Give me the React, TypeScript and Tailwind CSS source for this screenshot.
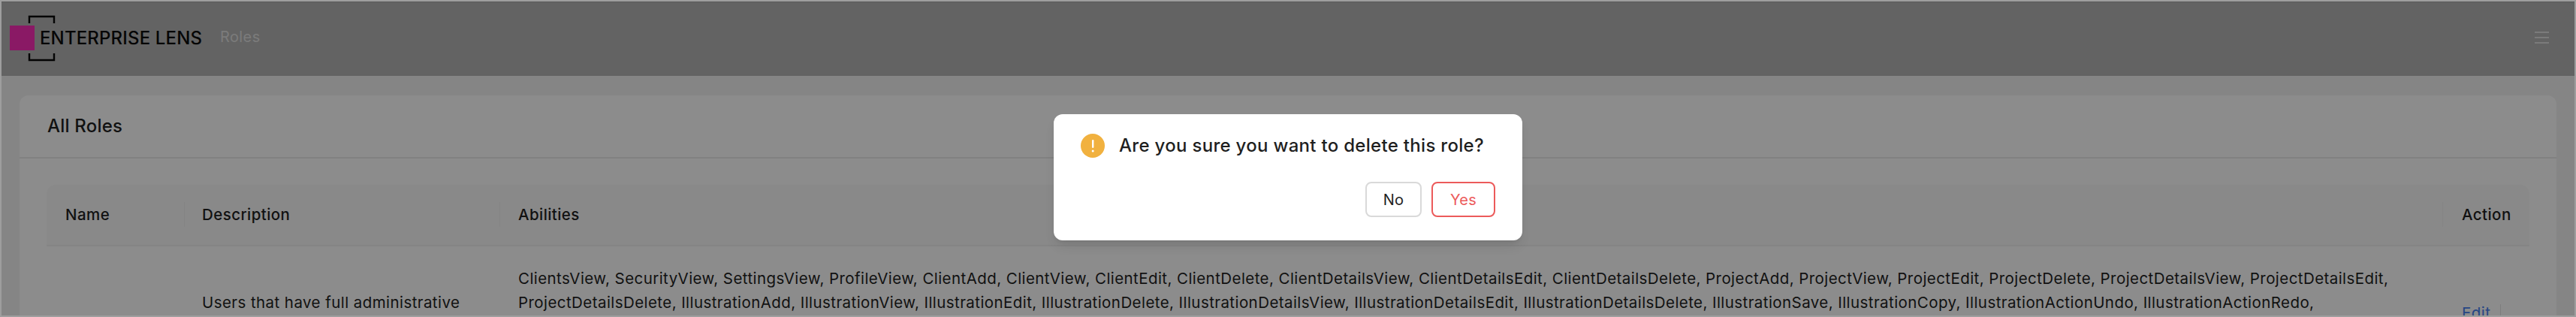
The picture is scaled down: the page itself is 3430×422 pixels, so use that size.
export default function App() {
  return (
    <div className="w-[3430px] h-[422px] overflow-hidden bg-[#9e9e9e] pt-[2px] px-[2px] font-['Inter',sans-serif]">
      <div className="relative h-[418px] overflow-hidden border-t border-[#5a5a5a] bg-[#f2f2f2] flex flex-col">
        <header className="h-[98px] shrink-0 bg-[#b4b4b4] flex items-center pl-[11px] pr-[34px]">
          <div className="relative w-[266px] h-[60px] mb-[2px] shrink-0">
            <svg width="60" height="60" viewBox="0 0 60 60" className="absolute left-[25px] top-0 overflow-visible" fill="none" stroke="#060606" strokeWidth="2.4">
              <path d="M1 10V1H34V10" />
              <path d="M1 50V59H34V50" />
            </svg>
            <div className="absolute left-0 top-[13px] w-[33px] h-[33px] bg-[#fb2fb9]" />
            <span className="absolute left-[40px] top-[14px] text-[24px] leading-[32px] font-medium text-[#0c0c0c] tracking-[0.15px] whitespace-nowrap">ENTERPRISE LENS</span>
          </div>
          <span className="ml-[14px] mb-[6px] text-[20px] leading-[28px] tracking-[0.4px] text-white/60">Roles</span>
          <div className="ml-auto mb-[4px] flex flex-col gap-[5px] w-[19px]">
            <span className="h-[2px] bg-white/60" />
            <span className="h-[2px] bg-white/60" />
            <span className="h-[2px] bg-white/60" />
          </div>
        </header>
        <main className="px-[24px] pt-[26px]">
          <section className="bg-white rounded-t-[12px]">
            <div className="h-[84px] flex items-center pl-[37px] border-b-2 border-[#ebebeb]">
              <h2 className="text-[24px] tracking-[0.2px] font-medium text-[#1f1f1f]">All Roles</h2>
            </div>
            <div className="pt-[35px] px-[36px]">
              <table className="w-full table-fixed border-collapse text-[20.5px] tracking-[0.43px] leading-[32px] text-[#1f1f1f]">
                <colgroup>
                  <col className="w-[183px]" />
                  <col className="w-[420px]" />
                  <col />
                  <col className="w-[116px]" />
                </colgroup>
                <thead>
                  <tr className="h-[81px] bg-[#fafafa] border-b-2 border-[#f0f0f0] text-left">
                    <th className="pl-[25px] font-medium rounded-tl-[12px]">Name</th>
                    <th className="pl-[24px] font-medium relative before:absolute before:left-0 before:top-[23px] before:h-[33px] before:w-[1px] before:bg-[#f0f0f0]">Description</th>
                    <th className="pl-[25px] font-medium relative before:absolute before:left-0 before:top-[23px] before:h-[33px] before:w-[1px] before:bg-[#f0f0f0]">Abilities</th>
                    <th className="pl-[26px] font-medium relative rounded-tr-[12px] before:absolute before:left-0 before:top-[23px] before:h-[33px] before:w-[1px] before:bg-[#f0f0f0]">Action</th>
                  </tr>
                </thead>
                <tbody>
                  <tr className="h-[182px]">
                    <td />
                    <td className="align-top pl-[24px] pt-[59px]">Users that have full administrative</td>
                    <td className="align-top pl-[25px] pt-[27px]">
                      ClientsView, SecurityView, SettingsView, ProfileView, ClientAdd, ClientView, ClientEdit, ClientDelete, ClientDetailsView, ClientDetailsEdit, ClientDetailsDelete, ProjectAdd, ProjectView, ProjectEdit, ProjectDelete, ProjectDetailsView, ProjectDetailsEdit, ProjectDetailsDelete, IllustrationAdd, IllustrationView, IllustrationEdit, IllustrationDelete, IllustrationDetailsView, IllustrationDetailsEdit, IllustrationDetailsDelete, IllustrationSave, IllustrationCopy, IllustrationActionUndo, IllustrationActionRedo,
                    </td>
                    <td className="align-top pl-[26px] pt-[73px]">
                      <span className="flex items-center">
                        <span className="text-[#4480f0]">Edit</span>
                        <span className="ml-[13px] h-[24px] w-[1px] bg-[#e5e5e5]" />
                      </span>
                    </td>
                  </tr>
                </tbody>
              </table>
            </div>
          </section>
        </main>
        <div className="absolute inset-0 bg-black/45" />
      </div>
      <div className="absolute left-[1403px] top-[152px] w-[624px] h-[168px] bg-white rounded-[12px] shadow-lg pt-[26px] px-[36px]">
        <div className="flex items-center gap-[19px] h-[32px]">
          <svg width="32" height="32" viewBox="0 0 32 32" className="shrink-0">
            <circle cx="16" cy="16" r="16" fill="#f1b13f" />
            <rect x="15" y="8" width="2.4" height="11" rx="1.2" fill="#fff" />
            <circle cx="16.2" cy="23" r="1.5" fill="#fff" />
          </svg>
          <p className="text-[24px] leading-[32px] tracking-[0.3px] font-medium text-[#1f1f1f] whitespace-nowrap">Are you sure you want to delete this role?</p>
        </div>
        <div className="mt-[32px] flex justify-end gap-[13px]">
          <button className="w-[75px] h-[47px] rounded-[8px] border-2 border-[#d9d9d9] bg-white text-[20px] tracking-[0.3px] text-[#1f1f1f]">No</button>
          <button className="w-[85px] h-[47px] rounded-[8px] border-2 border-[#ec5a5a] bg-white text-[20px] tracking-[0.3px] text-[#ec5a5a]">Yes</button>
        </div>
      </div>
    </div>
  );
}
